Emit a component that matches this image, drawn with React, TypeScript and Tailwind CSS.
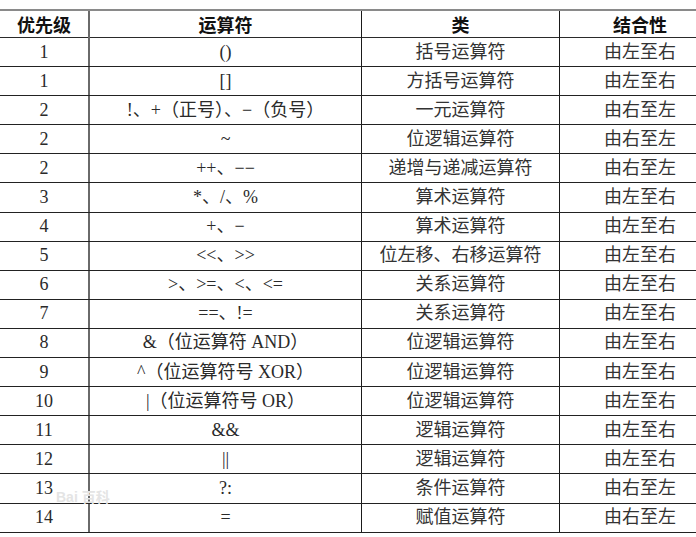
const rows: [string, string, string, string][] = [
    ['1', '()', '括号运算符', '由左至右'],
    ['1', '[]', '方括号运算符', '由左至右'],
    ['2', '!、+（正号）、−（负号）', '一元运算符', '由右至左'],
    ['2', '~', '位逻辑运算符', '由右至左'],
    ['2', '++、−−', '递增与递减运算符', '由右至左'],
    ['3', '*、/、%', '算术运算符', '由左至右'],
    ['4', '+、−', '算术运算符', '由左至右'],
    ['5', '<<、>>', '位左移、右移运算符', '由左至右'],
    ['6', '>、>=、<、<=', '关系运算符', '由左至右'],
    ['7', '==、!=', '关系运算符', '由左至右'],
    ['8', '&（位运算符 AND）', '位逻辑运算符', '由左至右'],
    ['9', '^（位运算符号 XOR）', '位逻辑运算符', '由左至右'],
    ['10', '|（位运算符号 OR）', '位逻辑运算符', '由左至右'],
    ['11', '&&', '逻辑运算符', '由左至右'],
    ['12', '||', '逻辑运算符', '由左至右'],
    ['13', '?:', '条件运算符', '由右至左'],
    ['14', '=', '赋值运算符', '由右至左'],
];

const gridCls = 'grid grid-cols-[90px_272px_198px_160px] w-[720px]';
const cellCls = 'flex items-center justify-center';

export default function App() {
    return (
        <div className="relative h-[537px] w-[696px] overflow-hidden bg-white">
            <div
                className="pt-[9px] text-[18px] text-[#2a2a2a]"
                style={{ fontFamily: '"Liberation Serif", "Noto Sans CJK SC", serif' }}
            >
                {/* header */}
                <div
                    className={`${gridCls} h-[29px] border-t-2 border-b border-t-[#8a8a8a] border-b-[#2a2a2a] font-bold text-[#111]`}
                    style={{ fontFamily: '"Noto Sans CJK SC", sans-serif' }}
                >
                    <div className={`${cellCls} border-r-2 border-[#6a6a6a]`}>优先级</div>
                    <div className={`${cellCls} border-r border-[#1a1a1a]`}>运算符</div>
                    <div className={`${cellCls} border-r border-[#1a1a1a]`}>类</div>
                    <div className={cellCls}>结合性</div>
                </div>
                {rows.map(([level, op, kind, assoc], i) => (
                    <div key={i} className={`${gridCls} h-[29.1px] border-b border-[#222]`}>
                        <div className={`${cellCls} border-r-2 border-[#6a6a6a]`}>{level}</div>
                        <div className={`${cellCls} border-r border-[#1a1a1a]`}>{op}</div>
                        <div className={`${cellCls} border-r border-[#1a1a1a] text-[#333]`}>{kind}</div>
                        <div className={`${cellCls} text-[#333]`}>{assoc}</div>
                    </div>
                ))}
            </div>
            {/* watermark */}
            <div
                className="absolute left-[56px] top-[487px] text-[14px] font-bold text-[#e4e4e4]"
                style={{ fontFamily: '"Liberation Sans", "Noto Sans CJK SC", sans-serif' }}
            >
                Bai 百科
            </div>
        </div>
    );
}
